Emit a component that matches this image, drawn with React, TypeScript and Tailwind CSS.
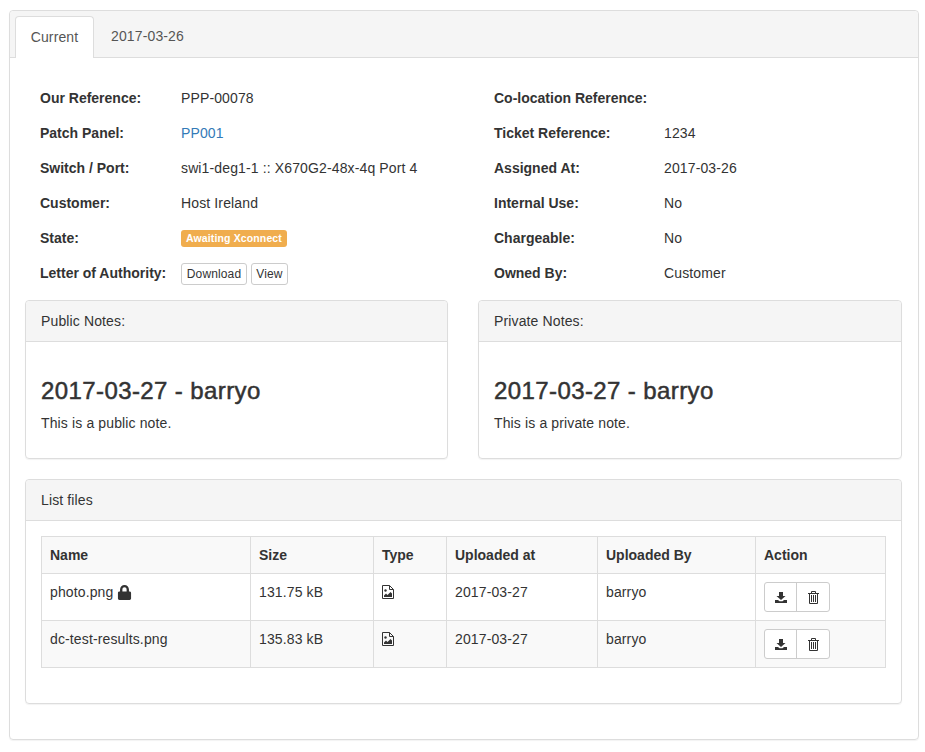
import { FaLock } from 'react-icons/fa';

const leftRows = [
  { label: 'Our Reference:', value: 'PPP-00078' },
  { label: 'Patch Panel:', value: <a className="text-[#337ab7]">PP001</a> },
  { label: 'Switch / Port:', value: 'swi1-deg1-1 :: X670G2-48x-4q Port 4' },
  { label: 'Customer:', value: 'Host Ireland' },
  {
    label: 'State:',
    value: (
      <span className="block mt-[2px] w-[106px] h-[17px] rounded-[3px] bg-[#f0ad4e] text-white text-[10.5px] leading-[17px] font-bold text-center">
        Awaiting Xconnect
      </span>
    ),
  },
  {
    label: 'Letter of Authority:',
    value: (
      <div className="flex gap-1 mt-[2px]">
        <button className="w-[66px] h-[22px] border border-[#ccc] rounded-[3px] text-xs bg-white">Download</button>
        <button className="w-[37px] h-[22px] border border-[#ccc] rounded-[3px] text-xs bg-white">View</button>
      </div>
    ),
  },
];

const rightRows = [
  { label: 'Co-location Reference:', value: '' },
  { label: 'Ticket Reference:', value: '1234' },
  { label: 'Assigned At:', value: '2017-03-26' },
  { label: 'Internal Use:', value: 'No' },
  { label: 'Chargeable:', value: 'No' },
  { label: 'Owned By:', value: 'Customer' },
];

const files = [
  { name: 'photo.png', locked: true, size: '131.75 kB', at: '2017-03-27', by: 'barryo' },
  { name: 'dc-test-results.png', locked: false, size: '135.83 kB', at: '2017-03-27', by: 'barryo' },
];

const DownloadIcon = () => (
  <svg width="12" height="11" viewBox="0 0 12 11" fill="#333">
    <path d="M4 0h4v4h2.500L6 8 1.500 4H4z" />
    <path d="M0 8h3l1.500 1.300h3L9 8h3v3H0z" />
  </svg>
);

const TrashIcon = () => (
  <svg width="11" height="13" viewBox="0 0 11 13" fill="none" stroke="#333" strokeWidth="1">
    <path d="M0 2.500h11M3.500 2.500V.5h4v2M1.500 2.500v10h8v-10M3.500 4v7M5.500 4v7M7.500 4v7" />
  </svg>
);

const FileImageIcon = () => (
  <svg width="12" height="14" viewBox="0 0 12 14" fill="none" stroke="#333" strokeWidth="1">
    <path d="M.5.5h7l4 4v9H.5zM7.500.5v4h4" />
    <circle cx="3.500" cy="5.500" r="1.200" fill="#333" stroke="none" />
    <path d="M2 12v-1.500l2-2 1.500 1.500 3-3 1.500 1.500V12z" fill="#333" stroke="none" />
  </svg>
);

const InfoRows = ({ rows, labelWidth }: { rows: typeof leftRows; labelWidth: string }) => (
  <div>
    {rows.map((row) => (
      <div key={row.label} className="flex items-center h-[35px]">
        <div className={`font-bold tracking-normal shrink-0 ${labelWidth}`}>{row.label}</div>
        <div>{row.value}</div>
      </div>
    ))}
  </div>
);

const NotePanel = ({ title, text, width }: { title: string; text: string; width: string }) => (
  <div className={`${width} h-[159px] border border-[#ddd] rounded-[4px] shadow-[0_1px_1px_rgba(0,0,0,0.05)]`}>
    <div className="h-[41px] px-[15px] flex items-center bg-[#f5f5f5] border-b border-[#ddd] rounded-t-[4px]">{title}</div>
    <div className="px-[15px] pt-[36px]">
      <h3 className="text-2xl leading-[26px] font-normal tracking-[0.4px] [-webkit-text-stroke:0.5px_#333]">2017-03-27 - barryo</h3>
      <p className="mt-[9px]">{text}</p>
    </div>
  </div>
);

const App = () => {
  return (
    <div className="bg-white w-[925px] h-[752px] pt-[10px] pl-[9px] text-sm tracking-[0.13px] text-[#333] font-['Liberation_Sans',Arial,sans-serif]">
      <div className="w-[910px] h-[730px] border border-[#ddd] rounded-[4px] shadow-[0_1px_1px_rgba(0,0,0,0.05)]">
        {/* tabs */}
        <div className="h-[47px] bg-[#f5f5f5] border-b border-[#ddd] rounded-t-[4px] pl-[5px] pt-[5px] flex">
          <div className="w-[79px] h-[42px] pb-[2px] bg-white border border-[#ddd] border-b-0 rounded-t-[4px] text-[#555] flex items-center justify-center">
            Current
          </div>
          <div className="w-[91px] h-[42px] pb-[2px] text-[#555] flex items-center justify-center ml-[8px]">2017-03-26</div>
        </div>

        <div className="px-[15px] pt-[22px]">
          <div className="flex pl-[15px]">
            <div className="w-[454px]">
              <InfoRows rows={leftRows} labelWidth="w-[141px]" />
            </div>
            <InfoRows rows={rightRows} labelWidth="w-[170px]" />
          </div>

          <div className="flex gap-[30px] w-[877px] mt-[10px]">
            <NotePanel width="w-[423px]" title="Public Notes:" text="This is a public note." />
            <NotePanel width="w-[424px]" title="Private Notes:" text="This is a private note." />
          </div>

          <div className="w-[877px] h-[225px] mt-[20px] border border-[#ddd] rounded-[4px] shadow-[0_1px_1px_rgba(0,0,0,0.05)]">
            <div className="h-[41px] px-[15px] flex items-center bg-[#f5f5f5] border-b border-[#ddd] rounded-t-[4px]">List files</div>
            <div className="px-[15px] pt-[15px]">
              <table className="w-[844px] table-fixed border-collapse border border-[#ddd]">
                <colgroup>
                  <col className="w-[209px]" />
                  <col className="w-[123px]" />
                  <col className="w-[73px]" />
                  <col className="w-[151px]" />
                  <col className="w-[158px]" />
                  <col className="w-[130px]" />
                </colgroup>
                <thead>
                  <tr className="h-[37px] bg-[#f9f9f9] text-left">
                    {['Name', 'Size', 'Type', 'Uploaded at', 'Uploaded By', 'Action'].map((h) => (
                      <th key={h} className="border border-[#ddd] px-2 font-bold tracking-normal">{h}</th>
                    ))}
                  </tr>
                </thead>
                <tbody>
                  {files.map((f, i) => (
                    <tr key={f.name} className={`h-[47px] ${i % 2 === 1 ? 'bg-[#f9f9f9]' : 'bg-white'}`}>
                      <td className="border border-[#ddd] px-2 pt-2 align-top leading-5">
                        <span className="inline-flex items-center gap-1">
                          {f.name}
                          {f.locked && <FaLock size={15} />}
                        </span>
                      </td>
                      <td className="border border-[#ddd] px-2 pt-2 align-top leading-5">{f.size}</td>
                      <td className="border border-[#ddd] px-2 pt-[11px] align-top">
                        <FileImageIcon />
                      </td>
                      <td className="border border-[#ddd] px-2 pt-2 align-top leading-5">{f.at}</td>
                      <td className="border border-[#ddd] px-2 pt-2 align-top leading-5">{f.by}</td>
                      <td className="border border-[#ddd] px-2 align-top pt-2">
                        <div className="flex w-[66px] h-[30px] border border-[#ccc] rounded-[3px] bg-white">
                          <div className="w-[32px] flex items-center justify-center border-r border-[#ccc]">
                            <DownloadIcon />
                          </div>
                          <div className="flex-1 flex items-center justify-center">
                            <TrashIcon />
                          </div>
                        </div>
                      </td>
                    </tr>
                  ))}
                </tbody>
              </table>
            </div>
          </div>
        </div>
      </div>
    </div>
  );
};

export default App;
